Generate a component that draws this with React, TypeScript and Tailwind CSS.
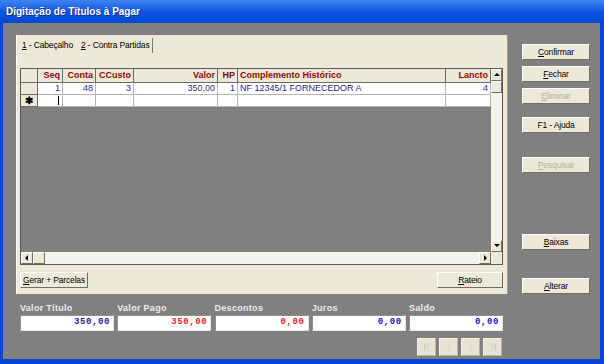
import React from "react";

const raised = "bg-[#ece9d8] border border-t-white border-l-white border-b-[#716f64] border-r-[#716f64]";

function Btn({ children, disabled, className = "" }: { children: React.ReactNode; disabled?: boolean; className?: string }) {
    return (
        <div
            className={`h-[16px] flex items-center justify-center text-[8.5px] tracking-[-0.15px] leading-none whitespace-nowrap ${raised} ${
                disabled ? "text-[#b3b09f]" : "text-black"
            } ${className}`}
        >
            {children}
        </div>
    );
}

function Arrow({ dir }: { dir: "up" | "down" | "left" | "right" }) {
    const pts = {
        up: "1,5 4,2 7,5",
        down: "1,2 4,5 7,2",
        left: "5,1 2,4 5,7",
        right: "3,1 6,4 3,7",
    }[dir];
    return (
        <svg width="8" height="8" viewBox="0 0 8 8">
            <polygon points={pts} fill="#000" />
        </svg>
    );
}

const cols = [
    { w: "w-[25px]", label: "Seq", v: "1", left: false },
    { w: "w-[33px]", label: "Conta", v: "48", left: false },
    { w: "w-[38px]", label: "CCusto", v: "3", left: false },
    { w: "w-[84px]", label: "Valor", v: "350,00", left: false },
    { w: "w-[20px]", label: "HP", v: "1", left: false },
    { w: "w-[208px]", label: "Complemento Histórico", v: "NF 12345/1 FORNECEDOR A", left: true },
    { w: "w-[45px]", label: "Lancto", v: "4", left: false },
];

const fields = [
    { label: "Valor Título", value: "350,00", color: "text-[#1c1ca0]" },
    { label: "Valor Pago", value: "350,00", color: "text-[#ee1c24]" },
    { label: "Descontos", value: "0,00", color: "text-[#ee1c24]" },
    { label: "Juros", value: "0,00", color: "text-[#1818c8]" },
    { label: "Saldo", value: "0,00", color: "text-[#1818c8]" },
];

function NavGlyph({ kind }: { kind: number }) {
    const c = "#cfccbc";
    return (
        <svg width="10" height="10" viewBox="0 0 10 10" fill="none" stroke={c} strokeWidth="1">
            {kind === 0 && (
                <>
                    <line x1="2.5" y1="1" x2="2.5" y2="9" />
                    <polyline points="7,1 4,5 7,9" />
                </>
            )}
            {kind === 1 && <polyline points="6.5,1 3.5,5 6.5,9" />}
            {kind === 2 && <polyline points="3.5,1 6.5,5 3.5,9" />}
            {kind === 3 && (
                <>
                    <polyline points="3,1 6,5 3,9" />
                    <line x1="7.5" y1="1" x2="7.5" y2="9" />
                </>
            )}
        </svg>
    );
}

export default function App() {
    return (
        <div className="w-[604px] h-[364px] flex flex-col bg-[#0845d6] pl-[3px] pr-[4px] pb-[5px] font-['Liberation_Sans',sans-serif] overflow-hidden">
            {/* title bar */}
            <div className="h-[23px] -ml-[3px] -mr-[4px] pl-[6px] flex items-center bg-linear-to-b from-[#3f84ee] via-[#0b56e2] to-[#0546d2]">
                <span className="text-white font-bold text-[10px] [text-shadow:1px_1px_0_#0a2f8f]">Digitação de Títulos à Pagar</span>
            </div>

            <div className="flex-1 flex bg-[#808080]">
                {/* left column */}
                <div className="ml-[13px] mt-[12px] w-[492px] flex flex-col">
                    {/* tab control */}
                    <div className="h-[259px] bg-[#ece9d8] border-l border-l-white border-r border-r-[#9c9a8e] flex flex-col">
                        <div className="h-[18px] flex items-end text-[8.5px] tracking-[-0.15px] text-black whitespace-nowrap">
                            <div className="w-[61px] h-[15px] pl-[5px] flex items-center">
                                <span><u>1</u> - Cabeçalho</span>
                            </div>
                            <div className="w-[75px] h-[15px] pl-[3px] flex items-center border-r border-r-[#7a786c]">
                                <span><u>2</u> - Contra Partidas</span>
                            </div>
                        </div>

                        {/* grid */}
                        <div className="mt-[15px] ml-[3px] w-[483px] h-[197px] border border-[#5a5a5a] bg-[#808080] flex flex-col">
                            <div className="flex-1 flex">
                                <div className="flex-1 flex flex-col">
                                    {/* header */}
                                    <div className="h-[14px] flex">
                                        <div className="w-[17px] bg-[#ece9d8] border-r border-b border-[#6a6a6a]" />
                                        {cols.map((c) => (
                                            <div
                                                key={c.label}
                                                className={`${c.w} bg-[#ece9d8] border-r border-b border-[#6a6a6a] px-[2px] flex items-center ${
                                                    c.left ? "justify-start" : "justify-end"
                                                } text-[9px] font-bold text-[#8e0a0a] whitespace-nowrap overflow-hidden`}
                                            >
                                                {c.label}
                                            </div>
                                        ))}
                                    </div>
                                    {/* row 1 */}
                                    <div className="h-[12px] flex">
                                        <div className="w-[17px] bg-[#ece9d8] border-r border-b border-[#6a6a6a]" />
                                        {cols.map((c, i) => (
                                            <div
                                                key={c.label}
                                                className={`${c.w} bg-white border-r border-b border-[#b5b5b5] px-[2px] flex items-center ${
                                                    c.left ? "justify-start text-[#1f1f86]" : "justify-end text-[#2a2ab4]"
                                                } ${i === 3 ? "text-[#34346a]" : ""} text-[9px] whitespace-nowrap overflow-hidden`}
                                            >
                                                {c.v}
                                            </div>
                                        ))}
                                    </div>
                                    {/* new row */}
                                    <div className="h-[12px] flex">
                                        <div className="w-[17px] bg-[#ece9d8] border-r border-b border-[#6a6a6a] flex items-center justify-center text-[10px] font-bold leading-none">
                                            ✱
                                        </div>
                                        {cols.map((c, i) => (
                                            <div key={c.label} className={`${c.w} bg-white border-r border-b border-[#b5b5b5] flex items-center justify-end pr-[3px]`}>
                                                {i === 0 && <div className="w-px h-[9px] bg-black" />}
                                            </div>
                                        ))}
                                    </div>
                                </div>
                                {/* vertical scrollbar */}
                                <div className="w-[11px] flex flex-col bg-[#f4f3ee]">
                                    <div className={`h-[12px] flex items-center justify-center ${raised}`}>
                                        <Arrow dir="up" />
                                    </div>
                                    <div className={`h-[12px] ${raised}`} />
                                    <div className="flex-1" />
                                    <div className={`h-[12px] flex items-center justify-center ${raised}`}>
                                        <Arrow dir="down" />
                                    </div>
                                </div>
                            </div>
                            {/* horizontal scrollbar */}
                            <div className="h-[12px] flex bg-[#f4f3ee]">
                                <div className={`w-[12px] flex items-center justify-center ${raised}`}>
                                    <Arrow dir="left" />
                                </div>
                                <div className={`w-[12px] ${raised}`} />
                                <div className="flex-1" />
                                <div className={`w-[12px] flex items-center justify-center ${raised}`}>
                                    <Arrow dir="right" />
                                </div>
                                <div className="w-[11px] bg-[#ece9d8]" />
                            </div>
                        </div>

                        <div className="mt-[7px] ml-[3px] mr-[4px] flex justify-between">
                            <Btn className="w-[68px]">
                                <span><u>G</u>erar + Parcelas</span>
                            </Btn>
                            <Btn className="w-[66px]">
                                <span><u>R</u>ateio</span>
                            </Btn>
                        </div>
                    </div>

                    {/* totals */}
                    <div className="mt-[9px] pl-[4px] flex gap-[3.25px]">
                        {fields.map((f) => (
                            <div key={f.label} className="w-[94px] flex flex-col">
                                <div className="h-[12px] text-[9px] font-bold text-[#ececec] tracking-[0.3px] leading-[11px] whitespace-nowrap">{f.label}</div>
                                <div className="h-[16px] bg-white border border-t-[#8f8f8f] border-l-[#8f8f8f] border-b-[#e4e4e4] border-r-[#e4e4e4] flex items-center justify-end pr-[3px]">
                                    <span className={`font-['Liberation_Mono',monospace] font-bold text-[9px] tracking-[0.6px] ${f.color}`}>{f.value}</span>
                                </div>
                            </div>
                        ))}
                    </div>

                    <div className="mt-[7px] pr-[6px] flex justify-end gap-[3px]">
                        {[0, 1, 2, 3].map((k) => (
                            <div key={k} className="w-[19px] h-[18px] flex items-center justify-center bg-[#e6e3d3] border border-t-[#f4f2e8] border-l-[#f4f2e8] border-b-[#b9b6a6] border-r-[#b9b6a6]">
                                <NavGlyph kind={k} />
                            </div>
                        ))}
                    </div>
                </div>

                {/* right column */}
                <div className="ml-[14px] mt-[21px] w-[68px] flex flex-col">
                    <Btn>
                        <span><u>C</u>onfirmar</span>
                    </Btn>
                    <Btn className="mt-[6px]">
                        <span><u>F</u>echar</span>
                    </Btn>
                    <Btn disabled className="mt-[6px]">
                        <span><u>E</u>liminar</span>
                    </Btn>
                    <Btn className="mt-[13px]">F1 - Ajuda</Btn>
                    <Btn disabled className="mt-[24px]">
                        <span><u>P</u>esquisar</span>
                    </Btn>
                    <Btn className="mt-[61px]">
                        <span><u>B</u>aixas</span>
                    </Btn>
                    <Btn className="mt-[28px]">
                        <span><u>A</u>lterar</span>
                    </Btn>
                </div>
            </div>
        </div>
    );
}
